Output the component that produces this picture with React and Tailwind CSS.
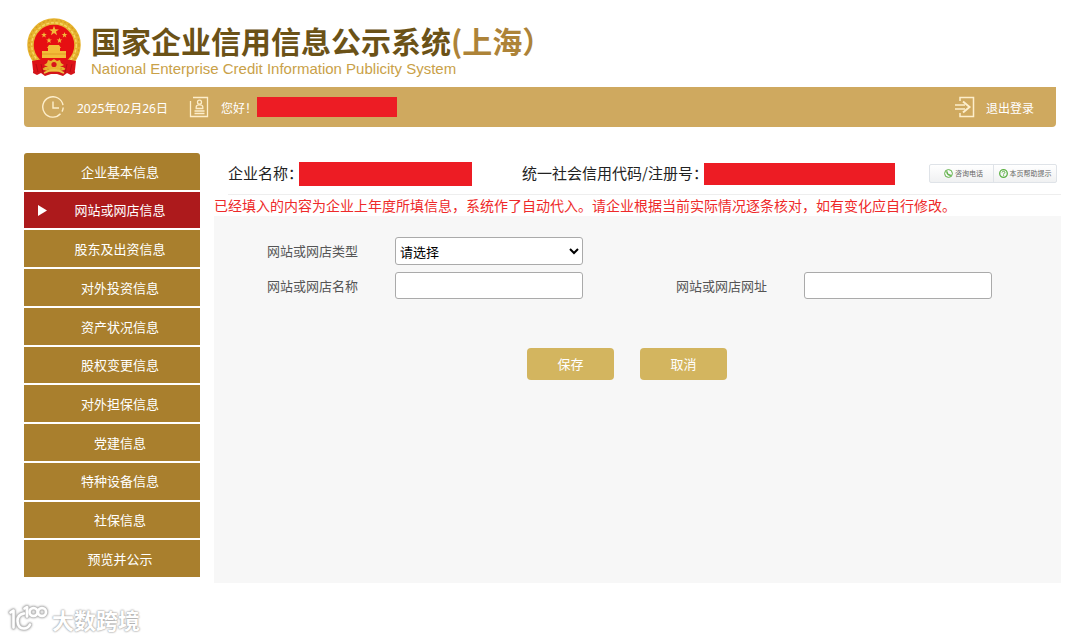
import React, { useState } from 'react';

const menuItems = [
    '企业基本信息',
    '网站或网店信息',
    '股东及出资信息',
    '对外投资信息',
    '资产状况信息',
    '股权变更信息',
    '对外担保信息',
    '党建信息',
    '特种设备信息',
    '社保信息',
    '预览并公示',
];

const Star = ({ x, y, r }) => (
    <polygon
        transform={`translate(${x} ${y}) scale(${r})`}
        points="0,-1 .24,-.32 .95,-.31 .38,.12 .59,.81 0,.4 -.59,.81 -.38,.12 -.95,-.31 -.24,-.32"
        fill="#f3b93a"
    />
);

const Emblem = () => (
    <svg width="54" height="58" viewBox="0 0 54 58" className="shrink-0" aria-hidden="true">
        {/* ribbons */}
        <path d="M7 42 L47 42 L48 55 L44 57 L40 55 L36 58 L30 56 L24 56 L18 58 L14 55 L10 57 L6 55 Z" fill="#d3141a" />
        {/* wreath */}
        <circle cx="27" cy="27" r="23.5" fill="#e60f12" stroke="#e6b32e" strokeWidth="6.5" />
        <circle cx="27" cy="27" r="25" fill="none" stroke="#d39a22" strokeWidth="1.2" strokeDasharray="2 2.4" />
        <circle cx="27" cy="27" r="22.3" fill="none" stroke="#f6d766" strokeWidth="1.4" strokeDasharray="3 1.6" />
        <Star x={27} y={13} r={5.2} />
        <Star x={17} y={17} r={3} />
        <Star x={37.5} y={17} r={3} />
        <Star x={22} y={22.5} r={3} />
        <Star x={32.5} y={22.5} r={3} />
        {/* gate */}
        <path d="M22 27 H32 L34 30 H20 Z M21 30 H33 V33 H21 Z M15 33 H39 V40 H15 Z" fill="#f2bd38" />
        <path d="M15 36 H39" stroke="#e39a25" strokeWidth="1" />
        <path d="M5 43 Q16 40 20 43 L34 43 Q38 40 49 43 L48 52 L43 54 L36 49 L18 49 L11 54 L6 52 Z" fill="#dd1118" />
        <path d="M27 41 L30 43 L33 42 L34 45 L37 47 L33 49 L30 52 L24 52 L21 49 L17 47 L20 45 L21 42 L24 43 Z" fill="#e9b32f" />
        <circle cx="27" cy="46.5" r="2.6" fill="#d8141a" />
        <path d="M17 55 Q27 49 37 55" fill="none" stroke="#eec046" strokeWidth="1.8" />
        <path d="M9 46 L11 54 M45 46 L43 54 M14 46 L16 55 M40 46 L38 55" stroke="#b80d12" strokeWidth="1" />
    </svg>
);

const ClockIcon = () => (
    <svg width="22" height="22" viewBox="0 0 22 22" fill="none" stroke="#fdeecb" strokeWidth="1.4" aria-hidden="true">
        <path d="M18.5 17.8 A10.2 10.2 0 1 1 21 9.2 M21.2 11.5 A10.2 10.2 0 0 1 20 15.6" />
        <path d="M11 5.5 V12 H17" />
    </svg>
);

const UserCardIcon = () => (
    <svg width="20" height="22" viewBox="0 0 20 22" fill="none" stroke="#fdeecb" strokeWidth="1.3" aria-hidden="true">
        <path d="M4 1.5 H18.5 V20.5 H1.5 V5" />
        <circle cx="10.5" cy="6.2" r="2" />
        <path d="M7.2 12.5 V11 Q7.2 8.9 10.5 8.9 Q13.8 8.9 13.8 11 V12.5 Z M5.5 15 H15.5 M5.5 17.5 H15.5" />
    </svg>
);

const ExitIcon = () => (
    <svg width="20" height="22" viewBox="0 0 20 22" fill="none" stroke="#fdeecb" strokeWidth="1.5" aria-hidden="true">
        <path d="M5 5 V1.5 H18.5 V20.5 H5 V17" />
        <path d="M0 9 H10 M0 13 H10" />
        <path d="M8 5.5 L14.5 11 L8 16.5" strokeWidth="2" />
    </svg>
);

const PhoneIcon = () => (
    <svg width="9" height="9" viewBox="0 0 18 18" fill="none" stroke="#5cb043" aria-hidden="true">
        <circle cx="9" cy="9" r="7.8" strokeWidth="2" />
        <path d="M5.8 5.5 Q6 11.5 12.5 12.6" strokeWidth="2.8" strokeLinecap="round" />
    </svg>
);

const HelpIcon = () => (
    <svg width="9" height="9" viewBox="0 0 18 18" fill="none" stroke="#5cb043" aria-hidden="true">
        <circle cx="9" cy="9" r="7.6" strokeWidth="2.6" />
        <path d="M6 7 Q6.5 4.5 9.2 4.6 Q12 4.8 11.8 7.2 Q11.4 8.8 9.2 9.6 V11 M9.2 12.5 V14.2" strokeWidth="2" />
    </svg>
);

const WatermarkLogo = () => (
    <svg width="40" height="30" viewBox="0 0 40 30" fill="none" strokeLinecap="round" strokeLinejoin="round" className="drop-shadow-[0_0_1px_#999]" aria-hidden="true">
        {['#c4c4c4', '#ffffff'].map((color, i) => (
            <g key={color} stroke={color} strokeWidth={i === 0 ? 4 : 2.5}>
                <path d="M2.5 8.5 L5.5 6.5 V23.5" />
                <path d="M16 9.5 Q9.5 10.5 9.5 17 Q10 24.5 16 24.5 Q20 24.5 22 20.5" />
                <path d="M16.5 4.5 L19 3 V12.5" />
                <circle cx="25.5" cy="8" r="4" />
                <circle cx="34" cy="8" r="4" />
            </g>
        ))}
    </svg>
);

const TextField = ({ id, label }) => (
    <div className="flex items-center">
        <label htmlFor={id} className="w-32 shrink-0">{label}</label>
        <input id={id} type="text" className="h-[27px] w-[188px] min-w-0 rounded-[3px] border border-[#aaa] bg-white px-1 text-black" />
    </div>
);

const App = () => {
    const [active, setActive] = useState(1);

    return (
        <div className="bg-white font-['Noto_Sans_CJK_SC',sans-serif]">
            {/* Header */}
            <header className="flex h-[87px] items-start px-[27px] pt-[18px]">
                <Emblem />
                <div className="ml-[10px]">
                    <h1 className="pt-[2px] text-[30px] leading-[40px] font-bold whitespace-nowrap text-[#6b5217]">
                        国家企业信用信息公示系统<span className="text-[#ad8338]">(上海）</span>
                    </h1>
                    <p className="font-['Liberation_Sans',sans-serif] text-[15px] leading-[18px] text-[#c9a148]">
                        National Enterprise Credit Information Publicity System
                    </p>
                </div>
            </header>

            {/* Status bar */}
            <div className="mx-6 flex h-10 items-center rounded-b-[4px] bg-[#cfa95f] pr-[22px] pl-[18px] font-['Noto_Sans','Noto_Sans_CJK_SC',sans-serif] text-[12px] text-white">
                <ClockIcon />
                <span className="ml-[13px] pt-[3px]">2025年02月26日</span>
                <span className="ml-[21px]"><UserCardIcon /></span>
                <span className="ml-3 pt-[3px]">您好！</span>
                <span className="h-5 w-[140px] bg-[#ed1c24]"></span>
                <button className="ml-auto flex items-center gap-[11px]">
                    <ExitIcon />
                    <span className="pt-[3px]">退出登录</span>
                </button>
            </div>

            <div className="mt-[26px] flex items-start gap-[14px] pr-[19px] pl-6">
                {/* Side menu */}
                <nav className="flex h-[424px] w-44 shrink-0 flex-col gap-[2px]">
                    {menuItems.map((item, index) => (
                        <button
                            key={item}
                            onClick={() => setActive(index)}
                            className={`relative flex-1 pl-4 text-[13px] text-white first:rounded-t-[3px] ${active === index ? 'bg-[#ad1a1c]' : 'bg-[#a97f2d]'}`}
                        >
                            {active === index && (
                                <svg width="9" height="11" viewBox="0 0 9 11" className="absolute top-[13px] left-[14px]" aria-hidden="true">
                                    <path d="M0 0 L9 5.5 L0 11 Z" fill="#fff" />
                                </svg>
                            )}
                            {item}
                        </button>
                    ))}
                </nav>

                <main className="min-w-0 flex-1">
                    {/* Company info */}
                    <div className="ml-[14px] flex h-[42px] items-center border-b border-[#eeeeee] pr-1 text-[15px] whitespace-nowrap text-[#222]">
                        <span>企业名称：</span>
                        <span className="-ml-1 h-6 w-[173px] bg-[#ed1c24]"></span>
                        <span className="ml-[50px]">统一社会信用代码/注册号：</span>
                        <span className="-ml-1 h-[22px] w-[191px] bg-[#ed1c24]"></span>
                        <div className="ml-auto flex h-[19px] rounded-[2px] border border-[#dfe3e8] bg-linear-to-b from-white to-[#f0f1f2] text-[7px] leading-[9px] text-[#666]">
                            <button className="flex w-16 items-center justify-center gap-[2px] border-r border-[#dfe3e8] pl-1">
                                <PhoneIcon />
                                咨询电话
                            </button>
                            <button className="flex w-[62px] items-center justify-center gap-[2px]">
                                <HelpIcon />
                                本页帮助提示
                            </button>
                        </div>
                    </div>
                    <p className="text-[14px] leading-[21px] text-[#ee2a2a]">
                        已经填入的内容为企业上年度所填信息，系统作了自动代入。请企业根据当前实际情况逐条核对，如有变化应自行修改。
                    </p>

                    {/* Form */}
                    <form
                        onSubmit={(e) => e.preventDefault()}
                        className="h-[367px] bg-[#f7f7f7] pt-[21px] pl-[53px] text-[13px] text-[#555]"
                    >
                        <div className="flex items-center">
                            <label htmlFor="siteType" className="w-32 shrink-0">网站或网店类型</label>
                            <select id="siteType" className="h-7 w-[188px] rounded-[3px] border border-[#aaa] bg-white text-black">
                                <option>请选择</option>
                            </select>
                        </div>
                        <div className="mt-[7px] flex gap-[93px]">
                            <TextField id="siteName" label="网站或网店名称" />
                            <TextField id="siteUrl" label="网站或网店网址" />
                        </div>
                        <div className="mt-[49px] flex justify-center gap-[26px] pr-[74px] text-white">
                            <button type="submit" className="h-8 w-[87px] rounded-[4px] bg-[#d3b55f]">保存</button>
                            <button type="button" className="h-8 w-[87px] rounded-[4px] bg-[#d3b55f]">取消</button>
                        </div>
                    </form>
                </main>
            </div>

            {/* Watermark */}
            <footer className="mt-[21px] flex items-start gap-1 pl-2">
                <WatermarkLogo />
                <span className="text-[22px] leading-[30px] font-bold text-white [text-shadow:0_0_2px_#999,0_0_2px_#aaa]">大数跨境</span>
            </footer>
        </div>
    );
};

export default App;
